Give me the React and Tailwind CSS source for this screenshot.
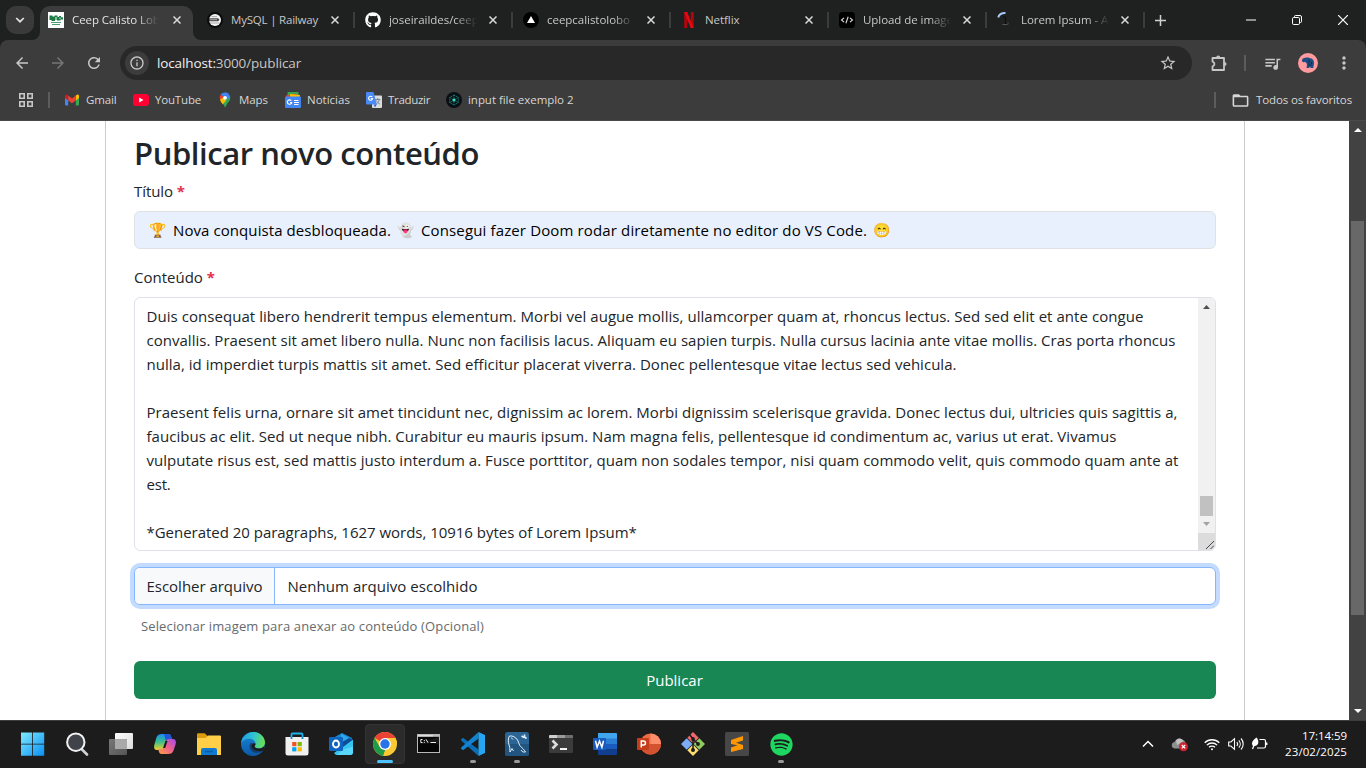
import {
  MdArrowBack,
  MdArrowForward,
  MdRefresh,
  MdStarBorder,
  MdMoreVert,
  MdQueueMusic,
  MdFolderOpen,
  MdInfoOutline,
} from "react-icons/md";
import { FaGithub, FaSpotify } from "react-icons/fa";

/* ---------- Favicons ---------- */

const CeepIcon = () => (
  <svg width="16" height="16" viewBox="0 0 16 16">
    <rect width="16" height="16" fill="#fff" />
    <path d="M1.500 3.500h3v1h2V3.500h3V5h1.500V4H13v1.300h2v2.200h-2.500v1H9V7.600H7V9H3.500V8h-2z" fill="#1c7a45" />
    <path d="M3 10h10v1H3zM4 12h8v.9H4z" fill="#4d9d6e" />
    <path d="M7.400 5h1.200v2H7.400zM11 5.800h2v.7h-2z" fill="#d9efe2" />
  </svg>
);

const RailwayIcon = () => (
  <svg width="16" height="16" viewBox="0 0 16 16">
    <circle cx="8" cy="8" r="8" fill="#0b0b0b" />
    <circle cx="8" cy="8" r="6" fill="#f4f4f4" />
    <path d="M2 6.200h8.500c2.300 0 2.300 3 0 3H2z" fill="#4a4a4a" />
    <path d="M4.500 4.600h5.500M3 11h9.500" stroke="#9a9a9a" strokeWidth=".8" />
    <path d="M3 7.700h7" stroke="#cfcfcf" strokeWidth=".7" />
  </svg>
);

const VercelIcon = () => (
  <svg width="16" height="16" viewBox="0 0 16 16">
    <circle cx="8" cy="8" r="8" fill="#000" />
    <path d="M8 4l4 7H4z" fill="#fff" />
  </svg>
);

const NetflixIcon = () => (
  <svg width="16" height="16" viewBox="0 0 16 16">
    <path d="M3.200 0h3v16l-3 .2zM9.800 0h3v16.200l-3-.3z" fill="#b1060f" />
    <path d="M3.200 0h3l6.600 16.200-3.100-.3z" fill="#e50914" />
  </svg>
);

const CodeIcon = () => (
  <svg width="16" height="16" viewBox="0 0 16 16">
    <rect width="16" height="16" rx="3.500" fill="#000" />
    <path d="M5 5.800L2.500 8 5 10.200M11 5.800L13.500 8 11 10.200M9.200 4.800l-2.300 6.400" stroke="#ddd" strokeWidth="1.100" fill="none" />
  </svg>
);

const LoadingIcon = () => (
  <svg width="16" height="16" viewBox="0 0 16 16">
    <path d="M1.200 5.500C2.200 2.500 5 .9 8.500 1.100" stroke="#a8c7fa" strokeWidth="2" fill="none" />
    <path d="M6.500 5h2v7h3" stroke="#0c0c0c" strokeWidth="1" fill="none" />
    <path d="M5.500 12.500h5M11 10.500v2" stroke="#555" strokeWidth="1" />
  </svg>
);

const GithubFavicon = () => <FaGithub size={16} color="#fff" />;

/* ---------- Browser tabs ---------- */

const CloseX = () => (
  <svg width="8" height="8" viewBox="0 0 8 8" className="shrink-0">
    <path d="M.5.5l7 7M7.500.5l-7 7" stroke="#dadada" strokeWidth="1.500" />
  </svg>
);

const fade = "[mask-image:linear-gradient(to_right,black_72%,transparent_96%)]";

const tabs = [
  { icon: RailwayIcon, title: "MySQL | Railway", cls: "tracking-[-0.2px]" },
  { icon: GithubFavicon, title: "joseiraildes/ceep", cls: "tracking-[-0.03px] " + fade },
  { icon: VercelIcon, title: "ceepcalistolobo -", cls: "tracking-[-0.03px] " + fade },
  { icon: NetflixIcon, title: "Netflix", cls: "tracking-[-0.06px]" },
  { icon: CodeIcon, title: "Upload de image", cls: "tracking-[-0.06px] " + fade },
  { icon: LoadingIcon, title: "Lorem Ipsum - A", cls: "tracking-[-0.06px] " + fade },
];

function TabStrip() {
  return (
    <div className="flex h-10 bg-[#1f2121]">
      <div className="ml-1.5 mt-1.5 flex h-7 w-7 shrink-0 items-center justify-center rounded-[10px] bg-[#3a3a3a]">
        <svg width="10" height="6" viewBox="0 0 10 6">
          <path d="M1.200 1L5 4.700 8.800 1" stroke="#e3e3e3" strokeWidth="1.700" fill="none" />
        </svg>
      </div>
      <div className="relative ml-1.5 mt-1.5 flex h-[34px] w-[153px] shrink-0 items-center rounded-t-[10px] bg-[#3c3c3c] pb-1.5 pl-2">
        <svg className="absolute -left-2 bottom-0" width="8" height="8"><path d="M8 0v8H0a8 8 0 0 0 8-8z" fill="#3c3c3c" /></svg>
        <svg className="absolute -right-2 bottom-0" width="8" height="8"><path d="M0 0v8h8a8 8 0 0 1-8-8z" fill="#3c3c3c" /></svg>
        <CeepIcon />
        <span className={"ml-2 w-[90px] overflow-hidden whitespace-nowrap tracking-[-0.08px] text-[#e3e3e3] " + fade}>
          Ceep Calisto Lob
        </span>
        <span className="ml-[11px] flex"><CloseX /></span>
      </div>
      <div className="ml-1 flex">
        {tabs.map(({ icon: Icon, title, cls }) => (
          <div key={title} className="flex w-[158px] shrink-0 items-center pl-2.5">
            <Icon />
            <span className={"ml-2 w-[92px] overflow-hidden whitespace-nowrap " + cls}>{title}</span>
            <span className="ml-2 flex"><CloseX /></span>
            <span className="ml-auto h-4 w-0.5 bg-[#3c3c3c]" />
          </div>
        ))}
      </div>
      <div className="ml-[10px] flex items-center">
        <svg width="11" height="11"><path d="M5.500 0v11M0 5.500h11" stroke="#d0d0d0" strokeWidth="1.500" /></svg>
      </div>
      <div className="ml-auto mr-[18px] flex items-center gap-[36px]">
        <svg width="10" height="10"><path d="M0 5h10" stroke="#fff" /></svg>
        <svg width="10" height="10" fill="none" stroke="#fff">
          <rect x=".5" y="2.500" width="7" height="7" rx="1.200" />
          <path d="M2.500 2.500V1.500a1 1 0 0 1 1-1h4.500a1.500 1.500 0 0 1 1.500 1.500v4.500a1 1 0 0 1-1 1h-1" />
        </svg>
        <svg width="10" height="10"><path d="M0 0l10 10M10 0L0 10" stroke="#fff" strokeWidth="1.200" /></svg>
      </div>
    </div>
  );
}

/* ---------- Toolbar ---------- */

const PuzzleIcon = () => (
  <svg width="18" height="18" viewBox="0 0 18 18">
    <path
      d="M2.500 4h11.500v12H2.500v-3.700c2.600-.8 2.600-3.800 0-4.600z"
      fill="none"
      stroke="#c7c7c7"
      strokeWidth="1.800"
      strokeLinejoin="round"
    />
    <path d="M6.200 3.500a2 2 0 0 1 4 0zM14.500 8a2 2 0 0 1 0 4z" fill="#c7c7c7" />
  </svg>
);

const Avatar = () => (
  <svg width="20" height="20" viewBox="0 0 20 20">
    <circle cx="10" cy="10" r="10" fill="#ff9a9f" />
    <path d="M4 7C5 4.500 9 4 11.500 5c3 .2 4.800 2.500 4.500 5.500l-.8 4.500h-2.700l-.3-1.500-1.200 1.500H8.500l.5-3.500C8.500 9.500 7.500 8.500 6 9.200 4.800 9.500 3.600 8.500 4 7z" fill="#1d4d80" />
    <path d="M11 7v3.500M13.500 9v2M10.500 12h3" stroke="#0c2846" strokeWidth="1" />
  </svg>
);

function Toolbar() {
  return (
    <div className="bg-[#1f2121]">
      <div className="flex h-[46px] items-center rounded-t-[8px] bg-[#3c3c3c] text-[#c7c7c7]">
        <div className="ml-[13px] flex gap-[18px]">
          <MdArrowBack size={18} />
          <MdArrowForward size={18} color="#757575" />
          <MdRefresh size={18} />
        </div>
        <div className="ml-[17px] flex h-[34px] w-[1072px] items-center rounded-full bg-[#282828] pl-[5px] pr-[15px]">
          <div className="flex h-6 w-6 items-center justify-center rounded-full bg-[#3c3c3c]">
            <MdInfoOutline size={16} />
          </div>
          <span className="ml-2 text-[13.5px] tracking-[-0.13px] text-[#c7c7c7]">
            <span className="text-[#f0f0f0]">localhost:</span>3000/publicar
          </span>
          <MdStarBorder size={18} className="ml-auto" />
        </div>
        <div className="ml-[18px] flex"><PuzzleIcon /></div>
        <div className="ml-4 h-4 w-0.5 bg-[#5c5c5c]" />
        <MdQueueMusic size={19} className="ml-[17px]" />
        <div className="ml-4 flex"><Avatar /></div>
        <MdMoreVert size={20} className="ml-4" />
      </div>
    </div>
  );
}

/* ---------- Bookmarks ---------- */

const GmailIcon = () => (
  <svg width="14" height="12" viewBox="0 0 14 12">
    <path d="M0 2v8.500a1 1 0 0 0 1 1h2.200V4z" fill="#4285f4" />
    <path d="M14 2v8.500a1 1 0 0 1-1 1h-2.200V4z" fill="#34a853" />
    <path d="M10.800 1.500L12 .7c.9-.6 2 0 2 1.300v2l-3.200 2.500z" fill="#fbbc04" />
    <path d="M3.200 1.500L2 .7C1.100.1 0 .7 0 2v2l3.200 2.500z" fill="#c5221f" />
    <path d="M3.200 1.500L7 4.500l3.800-3v5L7 9.300 3.200 6.500z" fill="#ea4335" />
  </svg>
);
const YoutubeIcon = () => (
  <svg width="16" height="12" viewBox="0 0 16 12">
    <rect width="16" height="12" rx="3" fill="#ff0033" />
    <path d="M6.200 3.500v5L10.500 6z" fill="#fff" />
  </svg>
);
const MapsIcon = () => (
  <svg width="12" height="16" viewBox="0 0 12 16">
    <path d="M1.900 9.600L8 3.500l3.200 1.200c.5 3-1.200 5-2.800 6.600L6 15.800c-.7-2.800-2.600-4.300-4.100-6.200z" fill="#34a853" />
    <path d="M6 5.500L9.800 1.800l1.500 3.500-3 2z" fill="#4285f4" />
    <path d="M6 5.500L1.500 2.800A5.300 5.300 0 0 0 1 7.500L3 8z" fill="#ea4335" />
    <path d="M6 5.500L1.600 2.600C3.500 0 7.500-.3 9.800 1.800z" fill="#4285f4" />
    <path d="M1 7.500l3.500-2 2.500 3.200-3.200 3.500C2.500 10.500 1.300 9.300 1 7.500z" fill="#fbbc04" />
    <circle cx="6" cy="5.800" r="1.900" fill="#fff" />
  </svg>
);
const NewsIcon = () => (
  <svg width="16" height="16" viewBox="0 0 16 16">
    <rect x="2.500" width="11" height="8" rx=".8" fill="#34a853" />
    <path d="M1 3.500L11 1.500l1 4H1z" fill="#ea4335" />
    <path d="M5 2l10 1-.5 4H5z" fill="#fbbc04" />
    <rect y="4.500" width="16" height="11.500" rx="1" fill="#4285f4" />
    <path d="M6.300 8.700a2.200 2.200 0 1 0 .4 1.800H5M9 8.500h4.500M9 10.500h5M9 12.500h4.500" stroke="#fff" strokeWidth="1.200" fill="none" />
  </svg>
);
const TranslateIcon = () => (
  <svg width="16" height="16" viewBox="0 0 16 16">
    <rect x="6" y="3.500" width="10" height="12.500" rx="1" fill="#dcdcdc" />
    <path d="M9 7.500h5.500M11.800 6v1.500M13.300 7.500c-.5 2.500-2 4-3.300 4.700M10.500 8.500c.5 1.500 2 3.200 3.500 3.700" stroke="#6f7f90" strokeWidth=".9" fill="none" />
    <path d="M1 0h6.500l3.300 12.500H1a1 1 0 0 1-1-1V1a1 1 0 0 1 1-1z" fill="#4a8af4" />
    <path d="M8 12.500h2.800L8.800 15.500z" fill="#1a5fd0" />
    <path d="M6.200 5a2 2 0 1 0 .4 1.500H4.800" stroke="#fff" strokeWidth="1.100" fill="none" />
  </svg>
);
const AtomIcon = () => (
  <svg width="16" height="16" viewBox="0 0 16 16">
    <circle cx="8" cy="8" r="8" fill="#0a0f14" />
    <path d="M8 3l4.300 2.500v5L8 13l-4.300-2.500v-5zM8 3v10M3.700 5.500l8.600 5M12.300 5.500l-8.600 5" stroke="#1c8f85" strokeWidth=".8" strokeDasharray="1.500 .7" fill="none" />
    <circle cx="8" cy="8" r="1.500" fill="#3fe0c8" />
  </svg>
);

function Bookmarks() {
  return (
    <div className="flex h-[35px] items-center border-b border-[#4a4a4a] bg-[#3c3c3c] pb-1.5 pr-[14px] text-[#d6d6d6]">
      <svg width="14" height="14" className="ml-[19px]" fill="none" stroke="#c7c7c7" strokeWidth="1.600">
        <path d="M.8.8h4.400v4.400H.8zM8.800.8h4.400v4.400H8.800zM.8 8.800h4.400v4.400H.8zM8.800 8.800h4.400v4.400H8.800z" />
      </svg>
      <span className="ml-[15px] h-4 w-0.5 bg-[#5c5c5c]" />
      <div className="ml-[15px] flex w-[68px] items-center gap-[7px]"><GmailIcon /><span className="tracking-[-0.14px]">Gmail</span></div>
      <div className="flex w-[86px] items-center gap-[6px]"><YoutubeIcon /><span className="tracking-[-0.18px]">YouTube</span></div>
      <div className="flex w-[66px] items-center gap-2"><MapsIcon /><span className="tracking-[-0.06px]">Maps</span></div>
      <div className="flex w-[81px] items-center gap-[6px]"><NewsIcon /><span>Notícias</span></div>
      <div className="flex w-[80px] items-center gap-[6px]"><TranslateIcon /><span className="tracking-[-0.3px]">Traduzir</span></div>
      <div className="flex items-center gap-[6px]"><AtomIcon /><span className="tracking-[-0.04px]">input file exemplo 2</span></div>
      <div className="ml-auto flex items-center">
        <span className="h-4 w-0.5 bg-[#5c5c5c]" />
        <MdFolderOpen size={19} className="ml-[15px]" />
        <span className="ml-[6px] tracking-[-0.12px]">Todos os favoritos</span>
      </div>
    </div>
  );
}

/* ---------- Page ---------- */

const lines = [
  ["Duis consequat libero hendrerit tempus elementum. Morbi vel augue mollis, ullamcorper quam at, rhoncus lectus. Sed sed elit et ante congue", "tracking-[0.056px]"],
  ["convallis. Praesent sit amet libero nulla. Nunc non facilisis lacus. Aliquam eu sapien turpis. Nulla cursus lacinia ante vitae mollis. Cras porta rhoncus", "tracking-[0.024px]"],
  ["nulla, id imperdiet turpis mattis sit amet. Sed efficitur placerat viverra. Donec pellentesque vitae lectus sed vehicula.", "tracking-[0.029px]"],
  ["", ""],
  ["Praesent felis urna, ornare sit amet tincidunt nec, dignissim ac lorem. Morbi dignissim scelerisque gravida. Donec lectus dui, ultricies quis sagittis a,", "tracking-[0.039px]"],
  ["faucibus ac elit. Sed ut neque nibh. Curabitur eu mauris ipsum. Nam magna felis, pellentesque id condimentum ac, varius ut erat. Vivamus", "tracking-[0.043px]"],
  ["vulputate risus est, sed mattis justo interdum a. Fusce porttitor, quam non sodales tempor, nisi quam commodo velit, quis commodo quam ante at", "tracking-[0.048px]"],
  ["est.", "tracking-[-0.2px]"],
  ["", ""],
  ["*Generated 20 paragraphs, 1627 words, 10916 bytes of Lorem Ipsum*", "tracking-[-0.024px]"],
];

const Emoji = ({ children }) => (
  <span className="flex w-[22px] justify-center pr-0.5 text-[14px] leading-6">{children}</span>
);

const Required = () => <span className="font-bold text-[#e4304a]">*</span>;

function PublishForm() {
  return (
    <main className="ml-[105px] w-[1140px] border-x border-[#cccccc] px-7 pt-[13px] text-[15px] leading-6 text-[#212529]">
      <h1 className="mb-[7px] h-[38px] whitespace-nowrap text-[31px] font-semibold leading-[38px] tracking-[-0.425px]">
        Publicar novo conteúdo
      </h1>
      <label className="mb-2 block h-6 tracking-[-0.07px]">
        Título <Required />
      </label>
      <div className="flex h-[38px] items-center gap-1 whitespace-nowrap rounded-md border border-[#dee2e6] bg-[#e8f0fe] pl-3 text-black">
        <Emoji>🏆</Emoji>
        <span className="w-[218px] tracking-[0.083px]">Nova conquista desbloqueada.</span>
        <Emoji>👻</Emoji>
        <span className="w-[446px] tracking-[0.136px]">Consegui fazer Doom rodar diretamente no editor do VS Code.</span>
        <Emoji>😁</Emoji>
      </div>
      <label className="mb-2 mt-4 block h-6">
        Conteúdo <Required />
      </label>
      <div className="flex h-[254px] overflow-hidden rounded-md border border-[#dee2e6] bg-white">
        <div className="grow whitespace-nowrap pl-[11.5px] pt-1.5">
          {lines.map(([text, cls], i) => (
            <p key={i} className={"h-6 " + cls}>{text}</p>
          ))}
        </div>
        <div className="flex w-[17px] shrink-0 flex-col items-center bg-[#f1f1f1]">
          <svg width="7" height="4" className="mt-[7px]"><path d="M3.500 0L7 4H0z" fill="#505050" /></svg>
          <div className="mt-[187px] h-5 w-[13px] bg-[#c1c1c1]" />
          <svg width="7" height="4" className="mt-1.5"><path d="M0 0h7L3.500 4z" fill="#a3a3a3" /></svg>
          <div className="mt-auto flex h-[17px] w-[17px] items-end justify-end bg-[#dcdcdc] pb-px pr-[1px]">
            <svg width="8" height="8"><path d="M0 8L8 0M4.500 8L8 4.500" stroke="#444" /></svg>
          </div>
        </div>
      </div>
      <div className="mt-4 flex h-[38px] items-stretch overflow-hidden rounded-md border border-[#86b7fe] bg-white leading-9 shadow-[0_0_0_4px_#c2dbfe]">
        <span className="w-[140px] border-r border-[#86b7fe] bg-[#f8f9fa] pl-[11.5px] tracking-[-0.02px]">Escolher arquivo</span>
        <span className="pl-[12.5px] tracking-[0.046px]">Nenhum arquivo escolhido</span>
      </div>
      <p className="ml-[7px] mt-[11px] h-[21px] text-[13px] leading-[21px] tracking-[0.137px] text-[#666a6e]">
        Selecionar imagem para anexar ao conteúdo (Opcional)
      </p>
      <button className="mt-6 block h-[38px] w-full rounded-md bg-[#198754] pr-px font-medium text-white">Publicar</button>
    </main>
  );
}

function PageScrollbar() {
  return (
    <div className="ml-auto flex w-[17px] flex-col items-center bg-[#424242]">
      <svg width="8" height="4" className="mt-[7px]"><path d="M4 0l4 4H0z" fill="#fff" /></svg>
      <div className="mr-[1px] mt-[89px] h-[394px] w-[13px] bg-[#686868]" />
      <svg width="8" height="4" className="mb-[7px] mt-auto"><path d="M0 0h8L4 4z" fill="#fff" /></svg>
    </div>
  );
}

/* ---------- Taskbar ---------- */

const Start = () => (
  <svg width="24" height="24" viewBox="0 0 24 24">
    <defs><linearGradient id="st" x1="0" y1="0" x2="1" y2="1"><stop stopColor="#7feaff" /><stop offset="1" stopColor="#0a90f5" /></linearGradient></defs>
    <path d="M0 .5h11.200v11.200H0zM12 .5h11.200v11.200H12zM0 12.500h11.200v11.200H0zM12 12.500h11.200v11.200H12z" fill="url(#st)" />
  </svg>
);
const Search = () => (
  <svg width="24" height="24" viewBox="0 0 24 24">
    <path d="M16.500 17l5.500 5.500" stroke="#cfd2d6" strokeWidth="2.600" strokeLinecap="round" />
    <circle cx="10.800" cy="10.200" r="8.700" fill="#40444a" stroke="#f1f1f1" strokeWidth="2" />
  </svg>
);
const TaskView = () => (
  <svg width="24" height="24" viewBox="0 0 24 24">
    <defs>
      <linearGradient id="tv" x2="1" y2="1"><stop stopColor="#fff" /><stop offset="1" stopColor="#dcdcdc" /></linearGradient>
      <linearGradient id="tw" x2="1" y2="1"><stop stopColor="#777" /><stop offset="1" stopColor="#555" /></linearGradient>
    </defs>
    <rect x="6" y="1" width="18" height="16" rx="1" fill="url(#tv)" />
    <rect x="0" y="7" width="18" height="16" rx="1" fill="url(#tw)" />
    <path d="M6 7h11a1 1 0 0 1 1 1v9H6z" fill="#a9a9a9" />
  </svg>
);
const Copilot = () => (
  <svg width="24" height="24" viewBox="0 0 24 24">
    <defs>
      <linearGradient id="ca" x1="0" y1="0" x2="0" y2="1"><stop stopColor="#1790f5" /><stop offset=".5" stopColor="#3cc08a" /><stop offset="1" stopColor="#f3d028" /></linearGradient>
      <linearGradient id="cb" x1="1" y1="0" x2="0" y2="1"><stop stopColor="#a04cf0" /><stop offset=".5" stopColor="#f0608c" /><stop offset="1" stopColor="#fca540" /></linearGradient>
    </defs>
    <path d="M9 2h6.500c1.500 0 2.300 1.200 2.800 3l.7 2h-3.500c-2 0-2.600 1.200-3 3l-1.700 6c-.4 1.500-1.200 2-2.500 2H4C1.500 18 .5 16 1.300 13l2-7C4.200 3 6 2 9 2z" fill="url(#ca)" />
    <path d="M15.500 2c1.500 0 2.300 1.200 2.800 3l.7 2h-3.500c-1.400 0-2.200.6-2.700 2L11 2z" fill="#2256d8" />
    <path d="M15 22H8.500c-1.500 0-2.300-1.200-2.800-3L5.200 17h3.300c2 0 2.600-1.200 3-3l1.700-5c.5-1.500 1.200-2 2.500-2H20c2.500 0 3.500 2 2.700 5l-2 6c-1 3-2.700 4-5.700 4z" fill="url(#cb)" />
    <path d="M12.500 9h2l-2.300 7H10z" fill="#1c1c1c" />
  </svg>
);
const Explorer = () => (
  <svg width="24" height="24" viewBox="0 0 24 24">
    <path d="M0 2.500a1.200 1.200 0 0 1 1.200-1.200h6.500L10.500 4v4H0z" fill="#dd9c0e" />
    <path d="M0 6h8.500L11 3.500h12a1 1 0 0 1 1 1V23H0z" fill="#ffcf48" />
    <path d="M4 23v-5a2 2 0 0 1 2-2h12a2 2 0 0 1 2 2v5z" fill="#0f7ad0" />
    <path d="M8 19.500h8" stroke="#0a5da8" strokeWidth="1.500" />
  </svg>
);
const Edge = () => (
  <svg width="24" height="24" viewBox="0 0 24 24">
    <defs>
      <linearGradient id="ea" x1="0" y1=".3" x2="1" y2=".5"><stop stopColor="#1e9de0" /><stop offset=".5" stopColor="#30c3d2" /><stop offset="1" stopColor="#6be04f" /></linearGradient>
      <linearGradient id="eb" x1="0" y1="0" x2="0" y2="1"><stop stopColor="#1a86dd" /><stop offset="1" stopColor="#0c59a4" /></linearGradient>
    </defs>
    <circle cx="12" cy="12" r="12" fill="url(#eb)" />
    <path d="M.1 11C1 4 6.500 0 12.200 0 19 0 24 5 24 10.500c0 3.500-2.800 6-6.200 6-3 0-4.300-1.200-4.200-2 .1-.6.900-1 .9-2.800 0-2.700-2.700-5-6-5C4.800 6.700 1.500 8.500.1 11z" fill="url(#ea)" />
    <path d="M9 12c-1.500 4.500 2 9 7 8.800 2.500 0 4.500-1 6-2.300-.8.300-2 .7-3.500.7-4.500 0-8-2.500-8-5.500 0-1.300.7-2 1.600-2.600C10.700 10.800 9.500 11 9 12z" fill="#123f73" />
    <path d="M24 12.500c-.8 2.500-3.200 4-6.200 4-3 0-4.300-1.200-4.200-2 .1-.6.900-1 .9-2.800-2-1.200-4 .3-4 2.300 0 3 3.500 5.200 8 5.200 1.500 0 3-.3 4-.8z" fill="#1c1c1c" />
  </svg>
);
const Store = () => (
  <svg width="24" height="24" viewBox="0 0 24 24">
    <path d="M6.500 6V2.500a1 1 0 0 1 1-1h9a1 1 0 0 1 1 1V6" fill="none" stroke="#1eb4e8" strokeWidth="1.800" />
    <path d="M.5 5h23v16a2.500 2.500 0 0 1-2.500 2.500H3A2.500 2.500 0 0 1 .5 21z" fill="#f0f0f0" />
    <path d="M7.200 10h4.200v4.200H7.200z" fill="#f25022" />
    <path d="M12.600 10h4.200v4.200h-4.200z" fill="#7fba00" />
    <path d="M7.200 15.200h4.200v4.200H7.200z" fill="#00a4ef" />
    <path d="M12.600 15.200h4.200v4.200h-4.200z" fill="#ffb900" />
    <path d="M6.500 5v2M17.500 5v2" stroke="#1288c0" strokeWidth="1.800" />
  </svg>
);
const Outlook = () => (
  <svg width="24" height="24" viewBox="0 0 24 24">
    <path d="M4 6l9-5 10 5v10H4z" fill="#1687d4" />
    <path d="M12 1.500l8 4.500v6h-8z" fill="#2fa8ea" />
    <path d="M24 7.500V20a3 3 0 0 1-3 3H7l-2-2z" fill="#35c5f0" />
    <path d="M24 7.500L12 16.500 10 12 20 6z" fill="#0d4d98" />
    <path d="M24 14.500V20a3 3 0 0 1-3 3H8l5-5z" fill="#58d8fa" />
    <rect y="5" width="14" height="14" rx="1.200" fill="#0f64c0" />
    <ellipse cx="7" cy="12" rx="3" ry="3.500" fill="none" stroke="#fff" strokeWidth="1.900" />
  </svg>
);
const Chrome = () => (
  <svg width="24" height="24" viewBox="0 0 24 24">
    <circle cx="12" cy="12" r="12" fill="#fcc934" />
    <path d="M12 12L1.600 6A12 12 0 0 1 22.400 6z" fill="#ea4335" />
    <path d="M1.600 6L6.800 15l5.200 3-2 5.800A12 12 0 0 1 1.600 6z" fill="#1e9a48" />
    <path d="M6.800 15l5 3-.3 6H12l5.200-9z" fill="#fcc934" />
    <path d="M6.800 15L12 18l-2.200 5.800L7 22z" fill="#1e9a48" />
    <path d="M12 6h10.400A12 12 0 0 1 24 12L17 9z" fill="#fcc934" />
    <circle cx="12" cy="12" r="6" fill="#fff" />
    <circle cx="12" cy="12" r="4.700" fill="#2a72e8" />
  </svg>
);
const Cmd = () => (
  <svg width="24" height="24" viewBox="0 0 24 24">
    <rect x=".5" y="2.500" width="22" height="18" fill="#050505" stroke="#b9b9b9" />
    <path d="M1 3h21v1.800H1z" fill="#dcdcdc" />
    <path d="M16.500 4h1M18.500 4h1M20.500 4h1" stroke="#555" />
    <path d="M5.500 7.500H3.800v3h1.700M7.300 8v1M7.300 9.800v1M9 7.300l2 3.400M13.500 10.500H19" stroke="#eee" strokeWidth="1" fill="none" />
    <path d="M1 12c8 1 14-3 21 1V5L12 8z" fill="#fff" opacity=".08" />
  </svg>
);
const VSCode = () => (
  <svg width="24" height="24" viewBox="0 0 24 24">
    <path d="M17.500 17.500L2 5.800.2 7.300a.8.800 0 0 0 0 1.200L17.500 24z" fill="#0b6fb8" />
    <path d="M17.500 6.500L2 18.200.2 16.700a.8.800 0 0 1 0-1.200L17.500 0z" fill="#1183d0" />
    <path d="M17.500 0L24 3v18l-6.500 3z" fill="#27a5f0" />
  </svg>
);
const Workbench = () => (
  <svg width="24" height="24" viewBox="0 0 24 24">
    <rect width="24" height="24" rx="2.500" fill="#2b6595" />
    <path d="M0 12h24v9.500a2.500 2.500 0 0 1-2.500 2.500h-19A2.500 2.500 0 0 1 0 21.500z" fill="#225480" />
    <path d="M5 20c-.5-2 .5-4-1-7-1-3-1-7 .5-9 3-.5 6 1 8 4 1.500 2.500 1.500 5 3 6.500 1.500 1 3.500 3 5 5.500-2 0-3 .5-4.500-2M5 20l2-3.500 1.500 2.500M6 6c1 0 1.500.7 2 1.500" stroke="#e4eef6" strokeWidth="1" fill="none" />
    <path d="M16.500 4l2.500 1.500M19.500 2.500v2.500l2 1.500" stroke="#e4eef6" strokeWidth="1.600" fill="none" />
  </svg>
);
const Terminal = () => (
  <svg width="24" height="24" viewBox="0 0 24 24">
    <rect y="3" width="24" height="18" rx="1" fill="#3b3b3b" />
    <path d="M1 3h7v3H0V4a1 1 0 0 1 1-1z" fill="#cfcfcf" />
    <path d="M8 3h8v3H8z" fill="#9a9a9a" />
    <path d="M16 3h7a1 1 0 0 1 1 1v2h-8z" fill="#6f6f6f" />
    <path d="M3.500 8.500l4 4-4 4" stroke="#dcdcdc" strokeWidth="2.600" fill="none" />
    <path d="M11 17h7" stroke="#f4f4f4" strokeWidth="2" />
  </svg>
);
const Word = () => (
  <svg width="24" height="24" viewBox="0 0 24 24">
    <path d="M5 1h18a1 1 0 0 1 1 1v5H5z" fill="#41a5ee" />
    <path d="M5 6.500h19V12H5z" fill="#2b7cd3" />
    <path d="M5 12h19v5.500H5z" fill="#185abd" />
    <path d="M5 17.500h19V22a1 1 0 0 1-1 1H6a1 1 0 0 1-1-1z" fill="#103f91" />
    <rect y="6" width="13" height="12" rx="1" fill="#185abd" />
    <path d="M2.500 8.800l1.600 6.400L6.500 9l2.400 6.200 1.600-6.400" stroke="#fff" strokeWidth="1.500" fill="none" />
  </svg>
);
const PowerPoint = () => (
  <svg width="24" height="24" viewBox="0 0 24 24">
    <circle cx="13.500" cy="12" r="10.500" fill="#ed6c47" />
    <path d="M13.500 1.500A10.500 10.500 0 0 1 24 12H13.500z" fill="#ff8f6b" />
    <path d="M3 12h21a10.500 10.500 0 0 1-21 0z" fill="#d35230" />
    <rect y="6" width="12" height="12" rx="1" fill="#c43e1c" />
    <path d="M4.300 15.500V9h2.200a1.900 1.900 0 0 1 0 3.900H4.300" stroke="#fff" strokeWidth="1.500" fill="none" />
  </svg>
);
const Git = () => (
  <svg width="24" height="24" viewBox="0 0 24 24">
    <path d="M12 0l5.700 5.700L12 11.400 6.300 5.700z" fill="#f0686a" />
    <path d="M18.300 6.300L24 12l-5.700 5.700-5.700-5.700z" fill="#8fce5e" />
    <path d="M12 12.600l5.700 5.700L12 24l-5.700-5.700z" fill="#ffdd6e" />
    <path d="M5.700 6.300l5.700 5.700-5.700 5.700L0 12z" fill="#7caef5" />
    <path d="M8.500 2.500L12 7v11M12 7l5 5" stroke="#1c1c1c" strokeWidth="1.500" fill="none" />
    <g fill="#1c1c1c"><circle cx="12" cy="7" r="1.900" /><circle cx="12" cy="18" r="2" /><circle cx="17" cy="12" r="1.900" /></g>
  </svg>
);
const Sublime = () => (
  <svg width="24" height="24" viewBox="0 0 24 24">
    <rect width="24" height="24" rx="1.500" fill="#474747" />
    <path d="M18 4v4.500L11 10.800 18 13v4L6 20v-4.500l6.500-2.200L6 12V8z" fill="#ff9800" />
  </svg>
);
const Spotify = () => <FaSpotify size={23} color="#1ed760" />;

const apps = [
  ["start", Start], ["search", Search], ["views", TaskView], ["copilot", Copilot],
  ["files", Explorer], ["edge", Edge], ["store", Store], ["mail", Outlook],
  ["chrome", Chrome, "active"], ["cmd", Cmd], ["vscode", VSCode, "open"], ["workbench", Workbench, "open"],
  ["terminal", Terminal], ["word", Word], ["ppt", PowerPoint], ["git", Git],
  ["sublime", Sublime], ["spotify", Spotify, "open"],
];

const tile = {
  active: "bg-[#2b2b2b] border-[#343434]",
  open: "border-transparent",
};

function Taskbar() {
  return (
    <footer className="flex h-12 items-center border-t border-[#3d3d3d] bg-[#1c1c1c]">
      <div className="ml-[13px] flex gap-1 pb-px">
        {apps.map(([id, Icon, state]) => (
          <div
            key={id}
            className={"relative flex h-10 w-10 items-center justify-center rounded-[4px] border " + (tile[state] || tile.open)}
          >
            <Icon />
            {state === "active" && <span className="absolute bottom-0 left-[11px] h-[3px] w-4 rounded-full bg-[#4cc2ff]" />}
            {state === "open" && <span className="absolute bottom-0 left-4 h-[3px] w-1.5 rounded-full bg-[#9a9a9a]" />}
          </div>
        ))}
      </div>
      <div className="ml-auto mr-[19px] flex items-center pb-px">
        <svg width="12" height="8" className="mr-[17px]"><path d="M1 6.500l5-5 5 5" stroke="#fff" strokeWidth="1.500" fill="none" /></svg>
        <svg width="18" height="16" viewBox="0 0 18 16" className="mr-[15px]">
          <path d="M3.500 12.500a3.300 3.300 0 0 1 0-6.500C4.500 3 9 1.500 12 4c2.500 1 3.500 4 2 8.500z" fill="#8e8e8e" />
          <path d="M5 4.500C7 1.500 11 2 12.500 5L6 9z" fill="#c2c2c2" />
          <circle cx="12.500" cy="10.700" r="4.500" fill="#d3202c" />
          <path d="M10.800 9l3.400 3.400M14.200 9l-3.400 3.400" stroke="#fff" strokeWidth="1.200" />
        </svg>
        <svg width="16" height="13" viewBox="0 0 16 13" className="mr-2" fill="none" stroke="#fff" strokeWidth="1.300">
          <path d="M.7 4.800a10.300 10.300 0 0 1 14.600 0M2.900 7.100a7.200 7.200 0 0 1 10.200 0M5 9.300a4.200 4.200 0 0 1 6 0" />
          <circle cx="8" cy="11.300" r="1" fill="#fff" stroke="none" />
        </svg>
        <svg width="17" height="14" viewBox="0 0 17 14" className="mr-[6px]" fill="none" stroke="#fff" strokeWidth="1.100">
          <path d="M.7 5v4h2.200l3.600 3.300V1.700L2.900 5z" />
          <path d="M8.800 5a3 3 0 0 1 0 4M10.800 3.300a5.500 5.500 0 0 1 0 7.400M13 1.500a8 8 0 0 1 0 11" />
        </svg>
        <svg width="17" height="14" viewBox="0 0 17 14" className="mr-[17px]">
          <path d="M8.500 2.500h4.500A1.500 1.500 0 0 1 14.500 4v5.500A1.500 1.500 0 0 1 13 11H6" stroke="#fff" strokeWidth="1.200" fill="none" />
          <path d="M14.800 5.500h1.600V8h-1.600z" fill="#fff" />
          <path d="M5.500.5C8 3.500 8 7 5 8.800L2 9.200C-.3 6.500 1.500 3 5.500.5z" fill="#fff" />
          <path d="M4.200 5.500L1.500 12" stroke="#fff" strokeWidth="1.300" />
        </svg>
        <div className="text-right text-[11.5px] leading-4 text-white">
          <p className="tracking-[-0.06px]">17:14:59</p>
          <p className="tracking-[0.09px]">23/02/2025</p>
        </div>
      </div>
    </footer>
  );
}

export default function App() {
  return (
    <div className="flex h-[768px] w-[1366px] flex-col overflow-hidden bg-white font-['Open_Sans','Segoe_UI',sans-serif]">
      <header className="text-[11.5px] leading-4 text-[#c7c7c7]">
        <TabStrip />
        <Toolbar />
        <Bookmarks />
      </header>
      <div className="flex h-[599px]">
        <PublishForm />
        <PageScrollbar />
      </div>
      <Taskbar />
    </div>
  );
}
